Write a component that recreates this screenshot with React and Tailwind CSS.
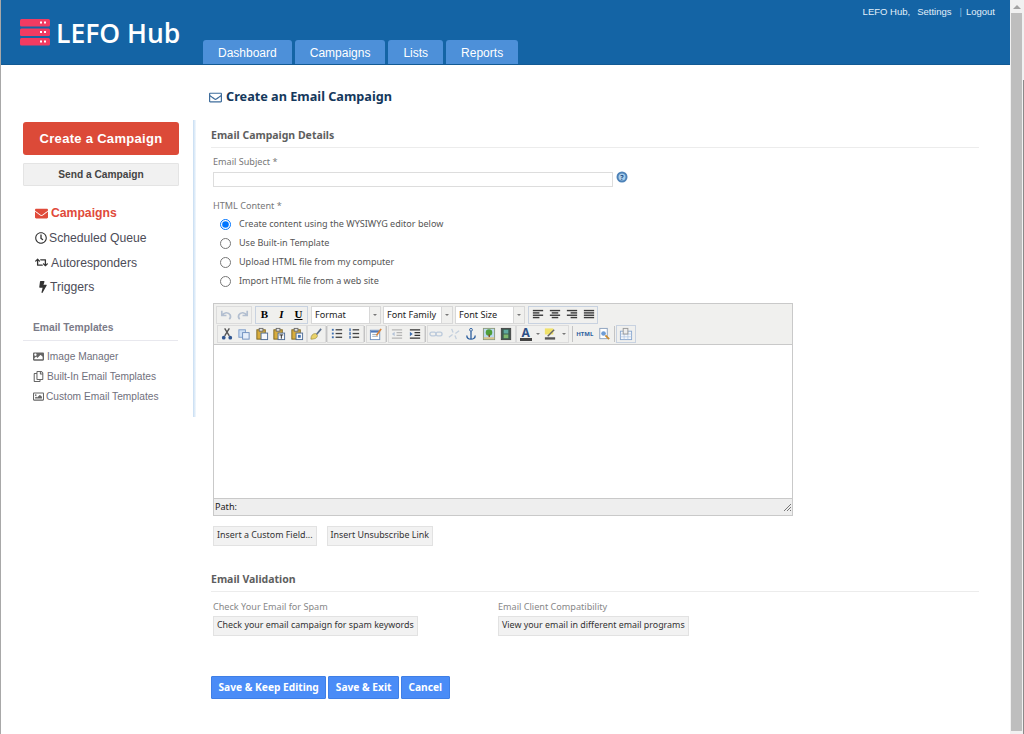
import { FaEnvelope, FaRegEnvelope, FaRegClock, FaRetweet, FaBolt, FaRegImage, FaRegCopy, FaImage } from 'react-icons/fa';

const tabs = ['Dashboard', 'Campaigns', 'Lists', 'Reports'];

const Logo = () => (
  <svg width="30" height="27" viewBox="0 0 30 27" className="shrink-0">
    {[0, 9.5, 19].map((y) => (
      <g key={y}>
        <rect x="0" y={y} width="30" height="7.5" rx="1.5" fill="#f23b62" />
        <rect x="20" y={y + 2.5} width="2" height="2" fill="#fff" />
        <rect x="24" y={y + 2.5} width="2" height="2" fill="#fff" />
      </g>
    ))}
  </svg>
);

const Btn = ({ narrow, children }) => (
  <span className={`h-[16px] ${narrow ? 'w-[17px]' : 'w-[17.5px]'} flex items-center justify-center`}>
    {children}
  </span>
);

const Ico = ({ children }) => (
  <svg width="14" height="14" viewBox="0 0 15 15">{children}</svg>
);

const Lines = ({ rows }) => (
  <Ico>
    {rows.map(([x, w], i) => (
      <rect key={i} x={x} y={2 + i * 2.5} width={w} height="1.5" fill="#3a3a3a" />
    ))}
  </Ico>
);

const Sep = ({ tight }) => <span className={`w-px h-[16px] bg-[#c4c4c4] ${tight ? '' : 'mr-[1px]'}`} />;

const Arrow = () => (
  <span className="border-x-[2px] border-t-[2px] border-x-transparent border-t-[#777]" />
);

const Select = ({ label }) => (
  <span className="w-[70px] h-[18px] flex border border-[#d8d8d8] bg-white whitespace-nowrap">
    <span className="flex-1 pl-[3px] text-[9.1px] leading-[16px] text-[#222]">{label}</span>
    <span className="w-[11px] bg-[#f0f0ee] border-l border-[#d8d8d8] flex items-center justify-center">
      <Arrow />
    </span>
  </span>
);

const Paste = ({ sheet }) => (
  <Ico>
    <rect x="2" y="3" width="9" height="10" fill="#d9ad3c" stroke="#7b6420" />
    <rect x="4.500" y="1.500" width="4" height="3" fill="#e4e4e4" stroke="#6b6b6b" />
    <rect x="6.500" y="6.500" width="7" height="7" fill="#f6f8fb" stroke="#4f6d96" />
    {sheet}
  </Ico>
);

const Toolbar = () => (
  <div className="h-[41px] bg-[#f0f0ee] border-b border-[#c9c9c9] pt-[1px] flex flex-col">
    <div className="h-[20px] flex items-center pl-[2px]">
      <span className="flex h-[18px] border border-[#dcdcdc]">
        <Btn narrow>
          <Ico><path d="M3 3v5h5M3.500 8C5 4.500 10 4 12 7.500c.8 1.800 0 3.500-1 4.500" fill="none" stroke="#b3bfd0" strokeWidth="1.800" /></Ico>
        </Btn>
        <Btn narrow>
          <Ico><path d="M12 3v5H7M11.500 8C10 4.500 5 4 3 7.500c-.8 1.800 0 3.500 1 4.500" fill="none" stroke="#b3bfd0" strokeWidth="1.800" /></Ico>
        </Btn>
      </span>
      <span className="w-[3px]" />
      <span className="flex h-[18px] border border-[#c8d2e0] font-bold text-[11px] leading-none text-black font-['Liberation_Serif',serif]">
        <Btn narrow>B</Btn>
        <Btn narrow><i>I</i></Btn>
        <Btn narrow><u>U</u></Btn>
      </span>
      <span className="w-[3px]" />
      <Select label="Format" />
      <span className="w-[2px]" />
      <Select label="Font Family" />
      <span className="w-[2px]" />
      <Select label="Font Size" />
      <span className="w-[3px]" />
      <span className="flex h-[18px] border border-[#c8d2e0]">
        <Btn narrow><Lines rows={[[2, 11], [2, 7], [2, 11], [2, 7]]} /></Btn>
        <Btn narrow><Lines rows={[[2, 11], [4, 7], [2, 11], [4, 7]]} /></Btn>
        <Btn narrow><Lines rows={[[2, 11], [6, 7], [2, 11], [6, 7]]} /></Btn>
        <Btn narrow><Lines rows={[[2, 11], [2, 11], [2, 11], [2, 11]]} /></Btn>
      </span>
    </div>
    <div className="h-[20px] flex items-center pl-[3px]">
      <span className="flex h-[18px] border border-[#dcdcdc]">
        <Btn>
          <Ico><path d="M5 1.500l5 8M10 1.500l-5 8" stroke="#555" strokeWidth="1.500" fill="none" /><circle cx="4" cy="11.500" r="2" fill="#2f5590" /><circle cx="11" cy="11.500" r="2" fill="#2f5590" /></Ico>
        </Btn>
        <Btn>
          <Ico><rect x="2" y="3" width="7" height="8" fill="#cfe0f5" stroke="#7c9cc8" /><rect x="6" y="6" width="7" height="7" fill="#e6eefa" stroke="#6f8fbe" /></Ico>
        </Btn>
        <Btn><Paste /></Btn>
        <Btn><Paste sheet={<path d="M8 8.500h4M10 8.500v4" stroke="#222" />} /></Btn>
        <Btn><Paste sheet={<rect x="8.500" y="8.500" width="3" height="3" fill="#3f6fb0" />} /></Btn>
      </span>
      <span className="flex h-[18px] border border-[#dcdcdc]">
        <Btn>
          <Ico><path d="M8 8l5-6" stroke="#5c6f8c" strokeWidth="1.800" /><path d="M2 13c0-4 2-6 5-6l2 2c0 3-3 4-7 4z" fill="#e9d26a" stroke="#8b7a30" strokeWidth=".6" /></Ico>
        </Btn>
      </span>
      <Sep tight />
      <span className="flex h-[18px] border border-[#dcdcdc]">
        <Btn>
          <Ico>
            {[3, 7, 11].map((y) => (
              <g key={y}>
                <rect x="2" y={y - 1} width="2" height="2" fill="#3f6fb0" />
                <rect x="6" y={y - 0.7} width="7" height="1.400" fill="#444" />
              </g>
            ))}
          </Ico>
        </Btn>
        <Btn>
          <Ico>
            {[3, 7, 11].map((y) => (
              <g key={y}>
                <rect x="2.500" y={y - 1.500} width="1.500" height="3" fill="#3f6fb0" />
                <rect x="6" y={y - 0.7} width="7" height="1.400" fill="#444" />
              </g>
            ))}
          </Ico>
        </Btn>
      </span>
      <Sep />
      <span className="flex h-[18px] border border-[#dcdcdc]">
        <Btn>
          <Ico>
            <rect x="1.500" y="3.500" width="10" height="10" fill="#fff" stroke="#6f8fbe" />
            <rect x="2" y="4" width="9" height="2" fill="#4d77b8" />
            <path d="M3.500 8h6M3.500 10h6" stroke="#9ab" />
            <path d="M8 9l5-7" stroke="#d8843a" strokeWidth="1.800" />
          </Ico>
        </Btn>
      </span>
      <Sep />
      <span className="flex h-[18px] border border-[#dcdcdc]">
        <Btn>
          <Ico><path d="M2 3h11M7 6h6M7 9h6M2 12h11" stroke="#b5b5b5" strokeWidth="1.400" /><path d="M5 5L2 7.500 5 10z" fill="#b5c4d8" /></Ico>
        </Btn>
        <Btn>
          <Ico><path d="M2 3h11M7 6h6M7 9h6M2 12h11" stroke="#333" strokeWidth="1.400" /><path d="M2 5l3 2.500L2 10z" fill="#3f6fb0" /></Ico>
        </Btn>
      </span>
      <Sep />
      <span className="flex h-[18px] border border-[#dcdcdc]">
        <Btn>
          <Ico><rect x="1" y="5.500" width="6.500" height="4" rx="2" fill="none" stroke="#bccadb" strokeWidth="1.400" /><rect x="7.500" y="5.500" width="6.500" height="4" rx="2" fill="none" stroke="#bccadb" strokeWidth="1.400" /></Ico>
        </Btn>
        <Btn>
          <Ico><path d="M2 11L6 8M9 7l4-3M5 2l1.500 4M10 13L8.500 9" stroke="#c3cfdd" strokeWidth="1.400" /></Ico>
        </Btn>
        <Btn>
          <Ico><circle cx="7.500" cy="3" r="1.500" fill="none" stroke="#2d5f9e" /><path d="M7.500 4.500V13M3 9c0 3 2 4 4.500 4S12 12 12 9" fill="none" stroke="#2d5f9e" strokeWidth="1.400" /></Ico>
        </Btn>
        <Btn>
          <Ico><rect x="1.500" y="1.500" width="12" height="12" fill="#bcd9f0" stroke="#8a9a7a" /><circle cx="7.500" cy="6" r="3.500" fill="#4f9e3a" /><rect x="7" y="8" width="1.500" height="3" fill="#7a4a22" /><rect x="2" y="11" width="11" height="2" fill="#d8c48a" /></Ico>
        </Btn>
        <Btn>
          <Ico><rect x="2.500" y="1.500" width="10" height="12" fill="#3d5a50" stroke="#444" /><rect x="5" y="3" width="5" height="4" fill="#5fa9a0" /><rect x="5" y="8" width="5" height="4" fill="#7db86e" /></Ico>
        </Btn>
      </span>
      <span className="flex h-[18px] border border-[#dcdcdc]">
        <Btn>
          <span className="flex flex-col items-center text-[12px] leading-[11px] font-bold text-[#2d4f86]">
            A
            <span className="w-[12px] h-[3px] bg-[#444]" />
          </span>
        </Btn>
        <span className="w-[7px] flex items-center justify-center"><Arrow /></span>
        <Btn>
          <Ico><rect x="2" y="1.500" width="9" height="6.500" fill="#f0e26a" /><path d="M5 10l7-7" stroke="#666" strokeWidth="1.500" /><rect x="2" y="11" width="11" height="2.500" fill="#555" /></Ico>
        </Btn>
        <span className="w-[9px] flex items-center justify-center"><Arrow /></span>
      </span>
      <span className="w-px h-[16px] bg-[#c4c4c4] mx-[3px]" />
      <Btn>
        <span className="text-[6px] font-bold text-[#2d5f9e] leading-none">HTML</span>
      </Btn>
      <span className="w-[2px]" />
      <Btn>
        <Ico><rect x="3" y="1.500" width="8" height="11" fill="#fff" stroke="#8aa0bd" /><circle cx="7" cy="7" r="2.500" fill="#6d9bd4" /><path d="M9 9l4 4" stroke="#c98a2e" strokeWidth="2" /></Ico>
      </Btn>
      <span className="w-px h-[16px] bg-[#c4c4c4] mx-[1px]" />
      <span className="flex h-[18px] border border-[#c8d2e0]">
        <Btn>
          <Ico><rect x="1.500" y="4.500" width="12" height="9" fill="#f4f7fb" stroke="#8aa8cf" /><path d="M1.500 7.500h12M1.500 10.500h12M5.500 4.500v9M9.500 4.500v9" stroke="#a9c0de" strokeWidth=".7" /><rect x="4.500" y="1.500" width="5" height="6" fill="#eee" stroke="#999" /></Ico>
        </Btn>
      </span>
    </div>
  </div>
);

const Plain = ({ children }) => (
  <button className="h-[20px] px-[3px] bg-[#f2f2f2] border border-[#e2e2e2] text-[8.9px] text-[#333] leading-none whitespace-nowrap">
    {children}
  </button>
);

const Primary = ({ children }) => (
  <button className="h-[23px] px-[6.5px] bg-[#4a8cf7] border border-[#3f7fe6] text-white font-bold text-[10.2px] leading-none whitespace-nowrap rounded-[1px]">
    {children}
  </button>
);

const Radio = ({ on, label }) => (
  <label className="flex items-center h-[19px] pl-[7px] text-[9.05px] text-[#555]">
    <input type="radio" name="content" defaultChecked={on} className="w-[11px] h-[11px] m-0 accent-[#0075ff]" />
    <span className="ml-[8px]">{label}</span>
  </label>
);

export default function App() {
  return (
    <div className="h-[734px] overflow-hidden flex bg-white font-['Noto_Sans',sans-serif]">
      <div className="flex-1 min-w-0 border-l border-[#a8a8a8]">
        <header className="h-[65px] bg-[#1464a5] border-b border-[#125a94] flex relative">
          <div className="w-[202px] pl-[19px] pt-[19px] flex items-start gap-[6px]">
            <Logo />
            <span className="-mt-[1px] text-[26.5px] leading-[30px] font-semibold text-white font-['Open_Sans',sans-serif] whitespace-nowrap">LEFO Hub</span>
          </div>
          <nav className="flex items-end gap-[3px] pt-[41px] font-['Liberation_Sans',sans-serif]">
            {tabs.map((t) => (
              <a key={t} className="h-[24px] pt-[2px] px-[15px] flex items-center bg-[#4d90d9] rounded-t-[3px] text-white text-[12px]">
                {t}
              </a>
            ))}
          </nav>
          <div className="absolute top-[6px] right-[15px] flex text-[#e2effa] text-[9.5px] leading-[12px] whitespace-pre font-['Liberation_Sans',sans-serif]">
            <span>LEFO Hub,</span>
            <span className="ml-[7px]">Settings</span>
            <span className="ml-[8px] text-[#7fb3e0]">|</span>
            <span className="ml-[4px]">Logout</span>
          </div>
        </header>
        <div className="flex">
          <aside className="w-[192px] shrink-0 pt-[57px] pl-[22px] font-['Liberation_Sans',sans-serif]">
            <button className="w-[156px] h-[33px] bg-[#dc4a38] rounded-[3px] text-white font-bold text-[13px] tracking-[0.3px]">
              Create a Campaign
            </button>
            <button className="mt-[8px] w-[156px] h-[23px] bg-[#f1f1f1] border border-[#e4e4e4] rounded-[1px] text-[#444] font-bold text-[10.2px]">
              Send a Campaign
            </button>
            <ul className="mt-[15px] pl-[12px] text-[12.2px] text-[#4c4c58]">
              <li className="h-[24.7px] flex items-center gap-[3px] font-bold text-[#e04a3a]">
                <FaEnvelope className="w-[13px] h-[13px]" />Campaigns
              </li>
              <li className="h-[24.7px] flex items-center gap-[2px]">
                <FaRegClock className="w-[12px] h-[12px] text-[#333]" />Scheduled Queue
              </li>
              <li className="h-[24.7px] flex items-center gap-[3px]">
                <FaRetweet className="w-[13px] h-[13px] text-[#333]" />Autoresponders
              </li>
              <li className="h-[24.7px] flex items-center gap-[3px] pl-[4px]">
                <FaBolt className="w-[8px] h-[12px] text-[#333]" />Triggers
              </li>
            </ul>
            <div className="mt-[20px] w-[155px] pl-[10px] pb-[5px] border-b border-[#e8e8ee] text-[10.3px] font-bold text-[#7b7b88]">
              Email Templates
            </div>
            <ul className="mt-[5px] pl-[10px] text-[10.2px] text-[#70707c]">
              <li className="h-[20px] flex items-center gap-[3px]">
                <FaImage className="w-[11px] h-[11px] text-[#666]" />Image Manager
              </li>
              <li className="h-[20px] flex items-center gap-[3px]">
                <FaRegCopy className="w-[11px] h-[11px] text-[#666]" />Built-In Email Templates
              </li>
              <li className="h-[20px] flex items-center gap-[2px]">
                <FaRegImage className="w-[11px] h-[11px] text-[#666]" />Custom Email Templates
              </li>
            </ul>
          </aside>
          <div className="w-[3px] h-[297px] mt-[55px] bg-gradient-to-r from-[#c6dcf2] to-[#f4f9fd]" />
          <main className="flex-1 min-w-0 pl-[15px] pr-[31px]">
            <h1 className="pt-[10px] h-[54px] flex items-center gap-[4px] -ml-[2px] text-[12.7px] font-bold text-[#14385c]">
              <FaRegEnvelope className="w-[13px] h-[13px] text-[#3f6d9c]" />
              Create an Email Campaign
            </h1>
            <h2 className="mt-[9px] pb-[3px] border-b border-[#ececec] text-[10.5px] font-bold text-[#5e5e5e]">
              Email Campaign Details
            </h2>
            <div className="pl-[2px]">
              <p className="mt-[7px] text-[9.1px] text-[#777] leading-[14px]">Email Subject *</p>
              <div className="mt-[3px] flex items-start">
                <input className="w-[400px] h-[15px] border border-[#ddd] bg-white" />
                <svg width="12" height="12" viewBox="0 0 12 12" className="ml-[3px] -mt-[1px]">
                  <circle cx="6" cy="6" r="5.500" fill="#4d82b8" />
                  <circle cx="6" cy="6" r="3.500" fill="#a9cdea" />
                  <text x="6" y="8.500" textAnchor="middle" fontSize="7" fontWeight="bold" fill="#1d4f85">?</text>
                </svg>
              </div>
              <p className="mt-[12px] text-[9.1px] text-[#777] leading-[14px]">HTML Content *</p>
              <div className="mt-[2px] flex flex-col">
                <Radio on label="Create content using the WYSIWYG editor below" />
                <Radio label="Use Built-in Template" />
                <Radio label="Upload HTML file from my computer" />
                <Radio label="Import HTML file from a web site" />
              </div>
              <div className="mt-[12px] w-[580px] h-[213px] border border-[#c9c9c9] flex flex-col">
                <Toolbar />
                <div className="flex-1 bg-white" />
                <div className="h-[17px] bg-[#eeeeee] border-t border-[#c9c9c9] flex items-center justify-between pl-[1px] text-[9.1px] text-[#222]">
                  <span>Path:</span>
                  <svg width="10" height="10" viewBox="0 0 10 10">
                    <path d="M2 9l7-7M5 9l4-4M8 9l1-1" stroke="#777" />
                  </svg>
                </div>
              </div>
              <div className="mt-[10px] flex gap-[10px]">
                <Plain>Insert a Custom Field...</Plain>
                <Plain>Insert Unsubscribe Link</Plain>
              </div>
            </div>
            <h2 className="mt-[26px] pb-[3px] border-b border-[#ececec] text-[10.5px] font-bold text-[#5e5e5e]">
              Email Validation
            </h2>
            <div className="pl-[2px] mt-[8px] flex">
              <div className="w-[285px]">
                <p className="text-[9.1px] text-[#888] leading-[14px]">Check Your Email for Spam</p>
                <div className="mt-[2px] flex"><Plain>Check your email campaign for spam keywords</Plain></div>
              </div>
              <div>
                <p className="text-[9.1px] text-[#888] leading-[14px]">Email Client Compatibility</p>
                <div className="mt-[2px] flex"><Plain>View your email in different email programs</Plain></div>
              </div>
            </div>
            <div className="mt-[40px] flex gap-[2px]">
              <Primary>Save &amp; Keep Editing</Primary>
              <Primary>Save &amp; Exit</Primary>
              <Primary>Cancel</Primary>
            </div>
          </main>
        </div>
      </div>
      <div className="w-[13px] shrink-0 bg-[#f1f1f1] flex flex-col items-center">
        <div className="h-[13px] flex items-center">
          <span className="border-x-[4px] border-b-[4px] border-x-transparent border-b-[#a3a3a3]" />
        </div>
        <div className="w-[11px] h-[718px] bg-[#bebebe]" />
      </div>
      <div className="w-px shrink-0 pt-[80px] bg-[#f1f1f1]">
        <div className="h-full bg-[#8a8a8a]" />
      </div>
    </div>
  );
}
